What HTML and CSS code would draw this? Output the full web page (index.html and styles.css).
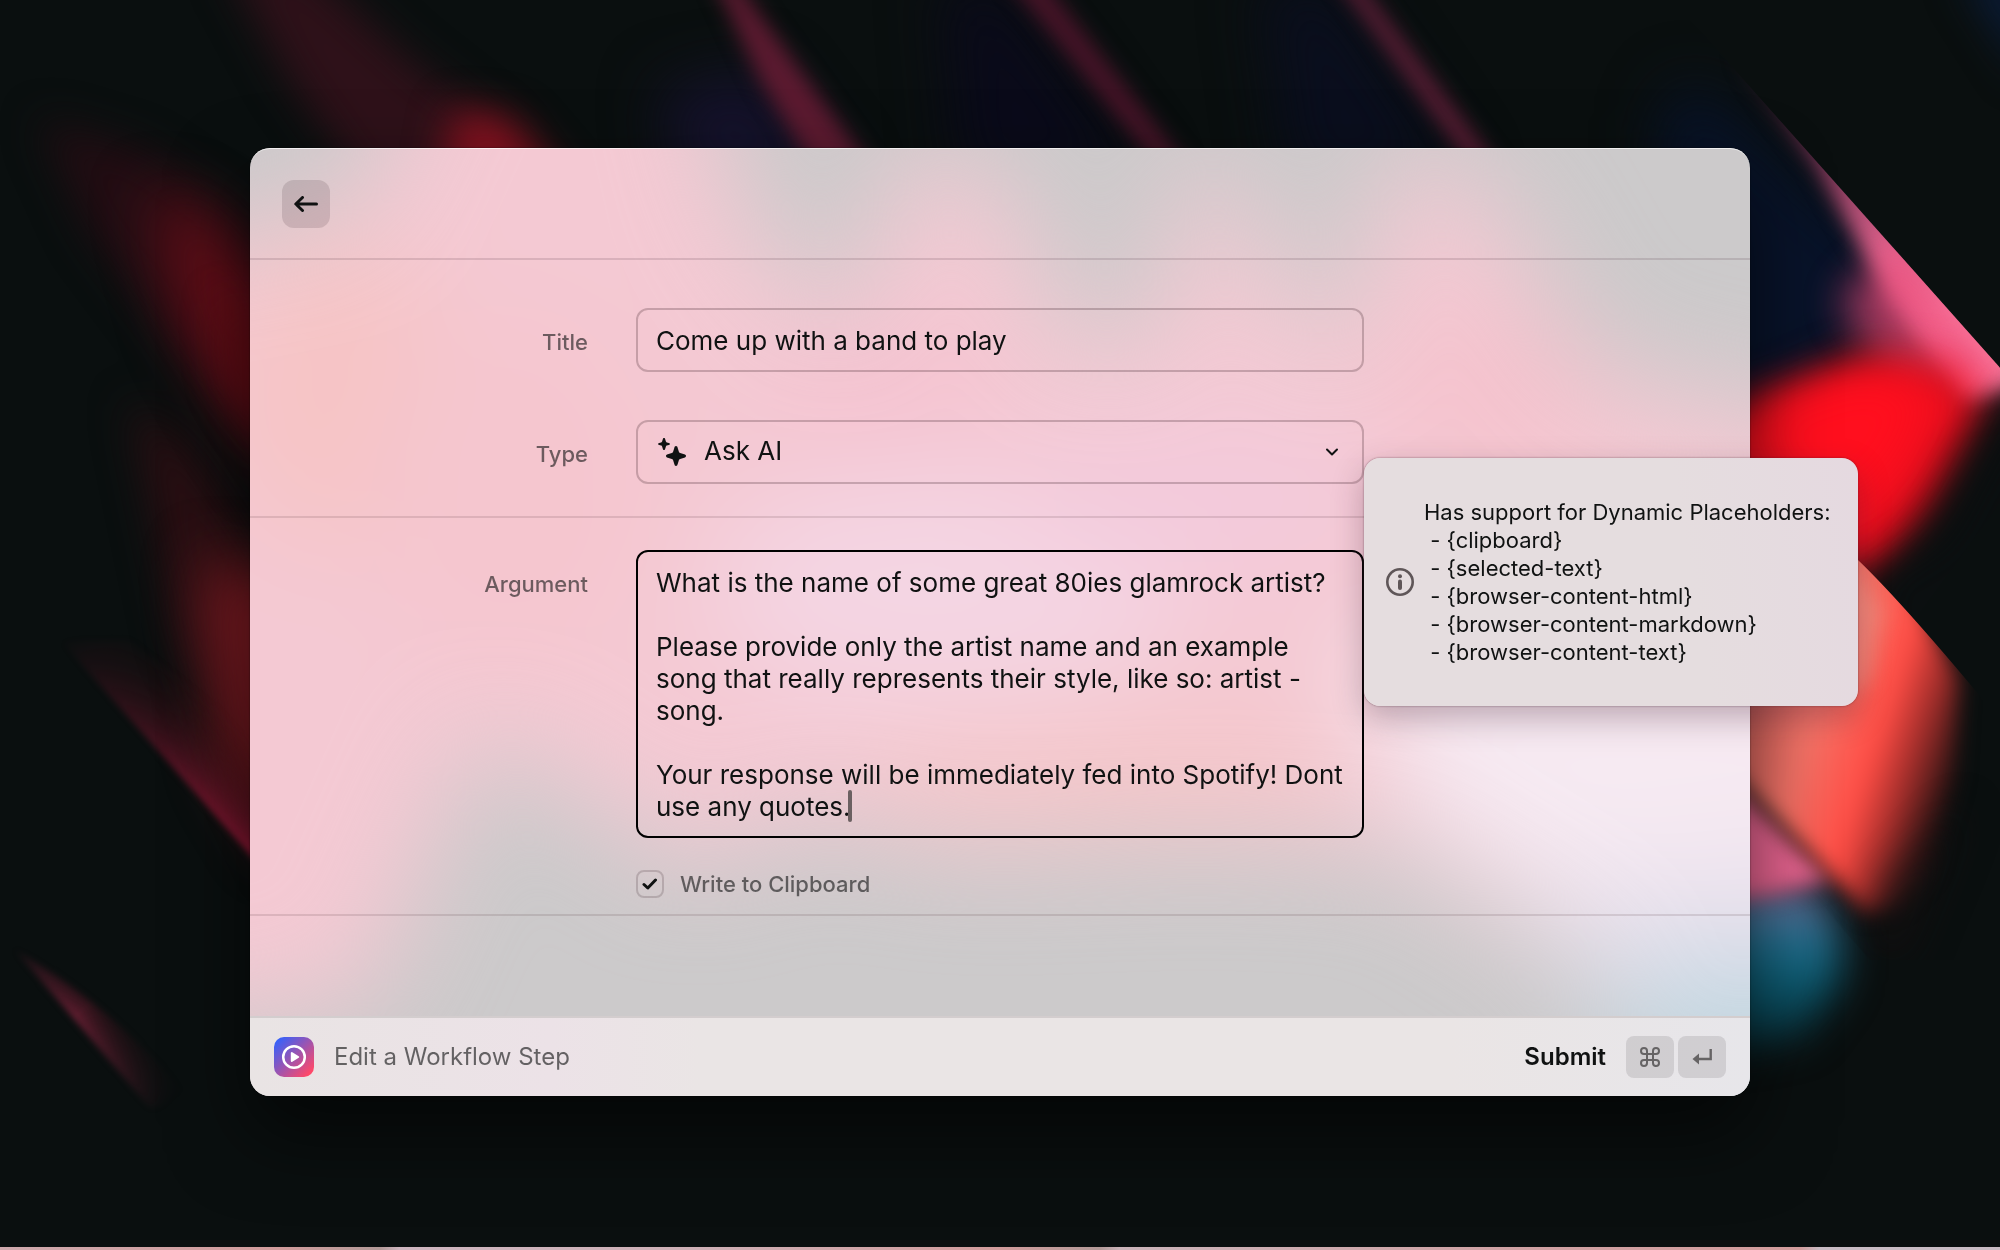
FILE: index.html
```html
<!DOCTYPE html>
<html lang="en">
<head>
<meta charset="utf-8">
<title>Edit a Workflow Step</title>
<link rel="stylesheet" href="styles.css">
</head>
<body>
<svg class="wallpaper" viewBox="0 0 2000 1250" preserveAspectRatio="xMidYMid slice" aria-hidden="true">
  <defs>
    <filter id="b3" filterUnits="userSpaceOnUse" x="-200" y="-200" width="2400" height="1650" color-interpolation-filters="sRGB"><feGaussianBlur stdDeviation="3"/></filter>
    <filter id="b10" filterUnits="userSpaceOnUse" x="-200" y="-200" width="2400" height="1650" color-interpolation-filters="sRGB"><feGaussianBlur stdDeviation="10"/></filter>
    <filter id="b20" filterUnits="userSpaceOnUse" x="-200" y="-200" width="2400" height="1650" color-interpolation-filters="sRGB"><feGaussianBlur stdDeviation="20"/></filter>
    <filter id="b30" filterUnits="userSpaceOnUse" x="-200" y="-200" width="2400" height="1650" color-interpolation-filters="sRGB"><feGaussianBlur stdDeviation="30"/></filter>
    <linearGradient id="edge" gradientUnits="userSpaceOnUse" x1="1720" y1="60" x2="1940" y2="320">
      <stop offset="0" stop-color="#50203c" stop-opacity="0"/><stop offset=".4" stop-color="#7a3456"/><stop offset=".75" stop-color="#e0648e"/><stop offset="1" stop-color="#ff80a4"/>
    </linearGradient>
    <linearGradient id="wedge" gradientUnits="userSpaceOnUse" x1="170" y1="765" x2="225" y2="715">
      <stop offset="0" stop-color="#8c1734"/><stop offset="1" stop-color="#5a1016" stop-opacity="0"/>
    </linearGradient>
    <linearGradient id="wedgeFade" gradientUnits="userSpaceOnUse" x1="60" y1="640" x2="250" y2="850">
      <stop offset="0" stop-color="#000"/><stop offset=".5" stop-color="#777"/><stop offset="1" stop-color="#fff"/>
    </linearGradient>
    <mask id="wedgeMask"><rect width="2000" height="1250" fill="url(#wedgeFade)"/></mask>
    <linearGradient id="sliver" gradientUnits="userSpaceOnUse" x1="85" y1="1038" x2="125" y2="1005">
      <stop offset="0" stop-color="#742239"/><stop offset="1" stop-color="#300c12" stop-opacity="0"/>
    </linearGradient>
    <linearGradient id="sliverFade" gradientUnits="userSpaceOnUse" x1="20" y1="950" x2="165" y2="1110">
      <stop offset="0" stop-color="#222"/><stop offset=".4" stop-color="#fff"/><stop offset="1" stop-color="#000"/>
    </linearGradient>
    <mask id="sliverMask"><rect width="2000" height="1250" fill="url(#sliverFade)"/></mask>
    <linearGradient id="coral" gradientUnits="userSpaceOnUse" x1="1750" y1="700" x2="1960" y2="770">
      <stop offset="0" stop-color="#d8665f"/><stop offset=".3" stop-color="#f67468"/><stop offset=".6" stop-color="#ff4d45"/><stop offset=".78" stop-color="#a52e2b"/><stop offset="1" stop-color="#1c1010"/>
    </linearGradient>
    <linearGradient id="teal" x1="0" y1="0" x2="0" y2="1">
      <stop offset="0" stop-color="#8a6a98"/><stop offset=".3" stop-color="#2a7294"/><stop offset=".55" stop-color="#0d6078"/><stop offset="1" stop-color="#07303a"/>
    </linearGradient>
    <clipPath id="facet"><path d="M1664 -10 2002 370V500L1900 640 1740 470 1500 160V-10Z"/></clipPath>
    <clipPath id="leaf"><path d="M1660 345 1858 560Q1905 605 2000 720V960H1870L1660 720Z"/></clipPath>
  </defs>
  <rect width="2000" height="1250" fill="#0a0f0f"/>

  <g filter="url(#b20)">
    <path d="M225-40H300L410 60 500 130 560 220H390L290 80Z" fill="#2e1119"/>
    <path d="M40 120 140 150 230 210 290 290V480L180 350 90 230Z" fill="#220d13"/>
    <path d="M130 400 190 450 290 600V880L180 640Z" fill="#2a0f13"/>
  </g>
  <path d="M455 110 510 120 570 190H440Z" fill="#8a1220" filter="url(#b20)"/>
  <path d="M150 190 210 220 280 300V480L190 330Z" fill="#6a0e18" filter="url(#b30)"/>
  <path d="M225 300 290 340V470L230 380Z" fill="#600c14" filter="url(#b20)"/>
  <path d="M205 560 290 580V860L230 760Z" fill="#8a1c24" filter="url(#b30)"/>
  <path d="M60 640 130 640 260 740V866Z" fill="url(#wedge)" mask="url(#wedgeMask)" filter="url(#b3)"/>
  <path d="M15 950 Q120 1010 200 1112L150 1108Z" fill="url(#sliver)" mask="url(#sliverMask)" filter="url(#b3)"/>

  <path d="M660 90 760 70 850 190H680Z" fill="#15122c" filter="url(#b30)"/>
  <path d="M705-40 735-20 880 180H820L760 80Z" fill="#5c1a30" filter="url(#b10)"/>
  <path d="M940-20H1000L1150 190H960Z" fill="#0a0a1a" filter="url(#b30)"/>
  <path d="M1000-30 1035-30 1190 170H1160Z" fill="#481428" filter="url(#b10)"/>
  <path d="M1260-20H1330L1470 190H1290Z" fill="#0a0e1e" filter="url(#b30)"/>
  <path d="M1330-30 1350-30 1500 170H1474Z" fill="#5e1e36" filter="url(#b10)"/>
  <path d="M1960-30H2030V80Z" fill="#0a1c38" filter="url(#b20)"/>

  <g clip-path="url(#facet)">
    <path d="M1690 80 1940 300 1850 360 1740 420 1660 380V120Z" fill="#08132a" filter="url(#b30)"/>
    <path d="M1690-10 2040 380 1960 400 1890 300 1815 165 1750 80Z" fill="url(#edge)" filter="url(#b10)"/>
    <path d="M1840 300 1900 240 2010 390 1900 400Z" fill="#e84a78" opacity=".7" filter="url(#b20)"/>
    <path d="M1700 420 1790 385 1870 355 1950 365 1985 400 1930 500 1870 580 1700 500Z" fill="#f00f1e" filter="url(#b20)"/>
    <path d="M1760 410 1860 375 1930 390 1900 460 1850 510 1780 470Z" fill="#ff0f1e" filter="url(#b20)"/>
    <path d="M2050 370 2000 430 1940 540 1870 580 1890 680H2050Z" fill="#0b0f10" filter="url(#b20)"/>
  </g>

  <path d="M1720 880 1810 880 1840 930 1840 980 1800 1035 1720 1050Z" fill="url(#teal)" filter="url(#b20)"/>
  <path d="M1720 770 1830 880 1770 895 1730 900Z" fill="#e86490" filter="url(#b10)"/>
  <g clip-path="url(#leaf)">
    <path d="M1720 480H1858L1960 680 1955 780 1930 870 1900 905 1868 915 1720 760Z" fill="url(#coral)" filter="url(#b10)"/>
    <path d="M1845 560 1885 610 1870 680 1845 700Z" fill="#f0a090" opacity=".5" filter="url(#b10)"/>
    <path d="M1970 800 1900 970 1860 940 1890 880Z" fill="#140f10" opacity=".7" filter="url(#b20)"/>
  </g>
</svg>
<div class="desk-edge"></div>

<main class="window">
  <svg class="glass" viewBox="0 0 1500 948" preserveAspectRatio="none" aria-hidden="true">
    <defs>
      <filter id="g" filterUnits="userSpaceOnUse" x="-300" y="-300" width="2100" height="1550" color-interpolation-filters="sRGB"><feGaussianBlur stdDeviation="55"/></filter>
    </defs>
    <rect width="1500" height="948" fill="#cccacb"/>
    <g filter="url(#g)">
      <path d="M-160 110 100 60 200-160H440L490 60 590 180 670-20 770 60 820 190 900 190 950-10 1080 210 1160-20 1250 60 1340 220 1680 300V900L1420 870 1150 700 960 690 700 700 560 670 440 720 320 640 230 590 190 680 110 860-160 880Z" fill="#f4c9d3"/>
      <ellipse cx="90" cy="250" rx="110" ry="150" fill="#f6c4c4"/>
      <ellipse cx="260" cy="340" rx="140" ry="180" fill="#f5c6cf"/>
      <ellipse cx="640" cy="240" rx="120" ry="60" fill="#f5c2d0"/>
      <ellipse cx="1240" cy="240" rx="110" ry="80" fill="#f5c2cd"/>
      <ellipse cx="700" cy="440" rx="240" ry="120" fill="#f4d5e3"/>
      <ellipse cx="950" cy="350" rx="180" ry="70" fill="#f3cadc"/>
      <ellipse cx="860" cy="620" rx="260" ry="50" fill="#f5c6c8"/>
      <path d="M1080 500 1640 500V800H1380L1180 680Z" fill="#f6eaf2"/>
      <path d="M1260 740 1640 700V880H1380Z" fill="#e8e0ec"/>
      <ellipse cx="1490" cy="880" rx="140" ry="70" fill="#c2d8e2"/>
    </g>
  </svg>

  <header class="bar">
    <button class="back" type="button" aria-label="Back">
      <svg width="24" height="16" viewBox="0 0 24 16" fill="none" stroke="#101212" stroke-width="3" stroke-linecap="round" stroke-linejoin="round"><path d="M22.500 8H2M8.500 1.500 1.800 8l6.700 6.500"/></svg>
    </button>
  </header>

  <form class="form" id="step">
    <section class="group">
      <div class="row">
        <label class="label" for="title">Title</label>
        <div class="field"><input class="control" id="title" type="text" value="Come up with a band to play"></div>
      </div>
      <div class="row">
        <label class="label" for="type">Type</label>
        <div class="field">
          <select class="control select" id="type"><option>Ask AI</option></select>
          <svg class="sparkles" width="28" height="28" viewBox="0 0 28 28" fill="#101212"><path d="M6 0c.7 0 1 .5 1.200 1.300l.7 2.300c.2.500.4.700.9.900l2.100.6c.8.200 1.100.5 1.100.9s-.3.700-1.100.9l-2.100.7c-.5.200-.7.400-.9.900l-.7 2.200C7 11.500 6.700 12 6 12s-1-.5-1.200-1.300l-.7-2.200c-.2-.5-.4-.7-.9-.9l-2.100-.7C.3 6.700 0 6.400 0 6s.3-.7 1.100-.9l2.100-.6c.5-.2.700-.4.9-.9l.7-2.300C5 .5 5.300 0 6 0ZM18 8c1 0 1.400.7 1.700 1.900l1.100 3.700c.2.800.6 1.200 1.400 1.400l4 1.300c1.200.4 1.800.8 1.800 1.700s-.6 1.300-1.800 1.700l-4 1.300c-.8.200-1.200.6-1.400 1.400l-1.100 3.700C19.400 27.300 19 28 18 28s-1.400-.7-1.700-1.900l-1.100-3.700c-.2-.8-.6-1.200-1.400-1.400l-4-1.300C8.600 19.300 8 18.900 8 18s.6-1.300 1.800-1.700l4-1.300c.8-.2 1.200-.6 1.400-1.400l1.100-3.700C16.600 8.700 17 8 18 8Z"/></svg>
          <svg class="chevron" width="14" height="8" viewBox="0 0 14 8" fill="none" stroke="#101212" stroke-width="2" stroke-linecap="round" stroke-linejoin="round"><path d="m2 1.500 5 5 5-5"/></svg>
        </div>
      </div>
    </section>

    <section class="group">
      <div class="row">
        <label class="label" for="argument">Argument</label>
        <div class="field">
          <textarea class="control area" id="argument" rows="8" aria-describedby="hint" spellcheck="false">What is the name of some great 80ies glamrock artist?

Please provide only the artist name and an example song that really represents their style, like so: artist - song.

Your response will be immediately fed into Spotify! Dont use any quotes.</textarea>
          <span class="caret"></span>
          <aside class="hint" id="hint" role="tooltip">
            <svg class="info" width="28" height="28" viewBox="0 0 28 28" fill="none"><circle cx="14" cy="14" r="12.700" stroke="#5f5658" stroke-width="2.600"/><circle cx="14" cy="8.200" r="2" fill="#5f5658"/><path d="M14 13.500v6.500" stroke="#5f5658" stroke-width="4" stroke-linecap="round"/></svg>
            <p class="hint-text">Has support for Dynamic Placeholders:
 - {clipboard}
 - {selected-text}
 - {browser-content-html}
 - {browser-content-markdown}
 - {browser-content-text}</p>
          </aside>
        </div>
      </div>
      <div class="row">
        <label class="check">
          <input class="tick" type="checkbox" checked>
          <svg class="tick-mark" width="16" height="12" viewBox="0 0 16 12" fill="none" stroke="#101212" stroke-width="3" stroke-linecap="round" stroke-linejoin="round"><path d="M2 6.500 5.800 10 13.500 2"/></svg>
          Write to Clipboard
        </label>
      </div>
    </section>
  </form>

  <footer class="footer">
    <svg class="logo" width="40" height="40" viewBox="0 0 40 40"><defs><linearGradient id="lg" x1="0" y1="0" x2="1" y2="1"><stop offset=".05" stop-color="#2f62ff"/><stop offset=".9" stop-color="#ff4869"/></linearGradient></defs><rect width="40" height="40" rx="10" fill="url(#lg)"/><circle cx="20" cy="20" r="10.800" fill="none" stroke="#fff" stroke-width="2.500"/><path d="M17.800 16v8l6.400-4Z" fill="#fff" stroke="#fff" stroke-width="2" stroke-linejoin="round"/></svg>
    <span class="footer-title">Edit a Workflow Step</span>
    <button class="submit" type="submit" form="step">Submit
      <span class="keys">
        <kbd class="key"><svg width="20" height="20" viewBox="0 0 20 20" fill="none" stroke="#666465" stroke-width="2"><path d="M7 7V4a3 3 0 1 0-3 3h12a3 3 0 1 0-3-3v12a3 3 0 1 0 3-3H4a3 3 0 1 0 3 3Z"/></svg></kbd>
        <kbd class="key"><svg width="20" height="16" viewBox="0 0 20 16" fill="none"><path d="M18.700 0v10H6" stroke="#666465" stroke-width="2.400"/><path d="M7 4.500v11L.5 10Z" fill="#666465"/></svg></kbd>
      </span>
    </button>
  </footer>
</main>
</body>
</html>
```
FILE: styles.css
```css
* { box-sizing: border-box; }

body {
  margin: 0;
  min-height: 100vh;
  padding: 148px 0;
  background: #0a0f0f;
  color: #101212;
  font-family: Inter, "Liberation Sans", sans-serif;
  font-size: 26px;
  line-height: 32px;
  overflow: hidden;
}

.wallpaper {
  position: fixed;
  inset: 0;
  width: 100%;
  height: 100%;
}

.desk-edge {
  position: fixed;
  left: 0;
  right: 0;
  bottom: 0;
  height: 3px;
  background: linear-gradient(90deg, #cfa9ad, #d29c9c 14%, #b39a98 19%, #cfb6c0 20%, #cfb0b6 35%, #d29c9c 50%, #b39a98 55%, #cbb4ba 56%, #d0a2a4 75%, #d29c9c 90%, #c9bcc4 91%);
}

.window {
  position: relative;
  z-index: 0;
  width: 75%;
  margin: 0 auto;
  border-radius: 20px;
  box-shadow: 0 0 2px rgba(0, 0, 0, 0.6), 0 36px 80px rgba(0, 0, 0, 0.6);
}

.glass {
  position: absolute;
  inset: 0;
  z-index: -1;
  width: 100%;
  height: 100%;
  border-radius: 20px;
}

.bar {
  display: flex;
  align-items: center;
  height: 112px;
  padding: 2px 32px 0;
  border-bottom: 2px solid rgba(60, 30, 40, 0.14);
  border-radius: 20px 20px 0 0;
  box-shadow: inset 0 2px 0 -1px rgba(255, 255, 255, 0.7);
}

button {
  border: 0;
  background: none;
  font: inherit;
  color: inherit;
}

.back {
  display: grid;
  place-items: center;
  width: 48px;
  height: 48px;
  padding: 0;
  border-radius: 12px;
  background: rgba(50, 30, 35, 0.14);
}

.group {
  display: grid;
  gap: 48px;
  padding: 48px 0 32px;
  border-bottom: 2px solid rgba(60, 30, 40, 0.13);
}

.group + .group {
  gap: 32px;
  padding: 32px 0 16px;
}

.row {
  display: grid;
  grid-template-columns: 1fr minmax(0, 728px) 1fr;
}

.label {
  padding: 18px 48px 0 0;
  text-align: right;
}

.label,
.check {
  font-size: 22px;
  font-weight: 500;
  color: rgba(16, 18, 18, 0.6);
}

.field { position: relative; }

.control {
  display: block;
  width: 100%;
  height: 64px;
  margin: 0;
  padding: 0 18px;
  border: 2px solid rgba(60, 30, 40, 0.25);
  border-radius: 12px;
  outline: none;
  background: transparent;
  color: inherit;
  font: inherit;
}

.select {
  appearance: none;
  padding: 0 64px 2px 66px;
}

.sparkles {
  position: absolute;
  left: 22px;
  top: 18px;
}

.chevron {
  position: absolute;
  right: 25px;
  top: 28px;
}

.area {
  height: auto;
  padding: 15px 12px 13px 18px;
  border-color: #000;
  resize: none;
  overflow: hidden;
}

.caret {
  position: absolute;
  left: 212px;
  top: 240px;
  width: 4px;
  height: 32px;
  border-radius: 2px;
  background: #6b6061;
}

.hint {
  position: absolute;
  left: 100%;
  top: -92px;
  display: flex;
  align-items: center;
  gap: 10px;
  min-width: 494px;
  padding: 40px 20px 40px 22px;
  border-radius: 16px;
  background: linear-gradient(80deg, #e5dddf 65%, #e5d9e0);
  box-shadow: 0 0 2px rgba(60, 30, 40, 0.6), 0 12px 32px rgba(60, 30, 50, 0.3);
}

.info { flex: none; }

.hint-text {
  margin: 0;
  font-size: 22px;
  line-height: 28px;
  white-space: pre;
}

.check {
  position: relative;
  grid-column: 2;
  display: flex;
  align-items: center;
  gap: 16px;
  line-height: 28px;
}

.tick {
  appearance: none;
  width: 28px;
  height: 28px;
  margin: 0;
  border: 2px solid rgba(60, 40, 45, 0.2);
  border-radius: 8px;
}

.tick-mark {
  position: absolute;
  left: 6px;
  top: 8px;
}

.footer {
  display: flex;
  align-items: center;
  gap: 20px;
  height: 80px;
  margin-top: 100px;
  padding: 0 24px;
  border-top: 2px solid #d3cdce;
  border-radius: 0 0 20px 20px;
  background: linear-gradient(90deg, #e9e4e4, #ece2e7 20%, #eae5e5 30%, #eae5e5 80%, #e7e6ea);
  font-size: 24px;
}

.footer-title { color: rgba(16, 18, 18, 0.62); }

.submit {
  display: flex;
  align-items: center;
  gap: 20px;
  margin-left: auto;
  padding: 0;
  font-weight: 600;
}

.keys {
  display: flex;
  gap: 4px;
}

.key {
  display: grid;
  place-items: center;
  width: 48px;
  height: 42px;
  border-radius: 8px;
  background: rgba(40, 36, 42, 0.12);
}
```
